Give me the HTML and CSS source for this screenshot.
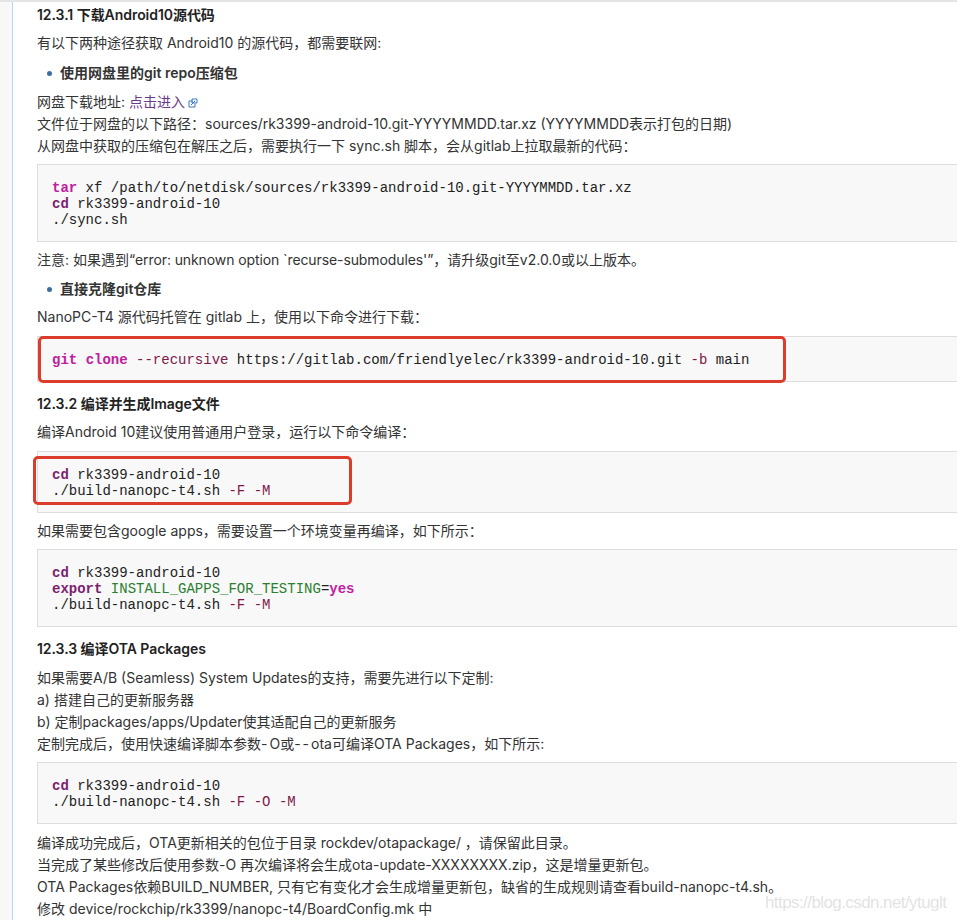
FILE: index.html
```html
<!DOCTYPE html>
<html lang="zh-CN">
<head>
<meta charset="utf-8">
<title>12.3 Android 10</title>
<link rel="stylesheet" href="styles.css">
</head>
<body>
<div class="page">
  <aside class="rail"></aside>
  <main class="content">
    <h4>12.3.1 下载Android10源代码</h4>
    <p class="gap-6">有以下两种途径获取 Android10 的源代码，都需要联网:</p>
    <ul class="list gap-8"><li><b>使用网盘里的git repo压缩包</b></li></ul>
    <p class="gap-7">网盘下载地址: <a class="link" href="#">点击进入<svg class="ext" viewBox="0 0 10 10" width="10" height="10"><path d="M1 3h4M1 3v6h6V6" fill="none" stroke="#3a78c2" stroke-width="1"/><path d="M4 1h5v4H4z" fill="none" stroke="#3a78c2" stroke-width="1"/><path d="M3 7l4-4" stroke="#3a78c2" stroke-width="1"/></svg></a><br>文件位于网盘的以下路径：sources/rk3399-android-10.git-YYYYMMDD.tar.xz (YYYYMMDD表示打包的日期)<br>从网盘中获取的压缩包在解压之后，需要执行一下 sync.sh 脚本，会从gitlab上拉取最新的代码：</p>
    <pre class="code gap-7"><span class="kw">tar</span> xf /path/to/netdisk/sources/rk3399-android-10.git-YYYYMMDD.tar.xz
<span class="bi">cd</span> rk3399-android-10
./sync.sh</pre>
    <p class="gap-7">注意: 如果遇到<span class="tight">“error: unknown option `recurse-submodules'”</span>，请升级git至v2.0.0或以上版本。</p>
    <ul class="list gap-7"><li><b>直接克隆git仓库</b></li></ul>
    <p class="gap-6">NanoPC-T4 源代码托管在 gitlab 上，使用以下命令进行下载：</p>
    <pre class="code gap-8"><span class="kw">git</span> <span class="kw">clone</span> <span class="op">--recursive</span> https://gitlab.com/friendlyelec/rk3399-android-10.git <span class="op">-b</span> main<span class="mark mark-a"></span></pre>
    <h4 class="gap-11">12.3.2 编译并生成Image文件</h4>
    <p class="gap-6">编译Android 10建议使用普通用户登录，运行以下命令编译：</p>
    <pre class="code gap-8"><span class="bi">cd</span> rk3399-android-10
./build-nanopc-t4.sh <span class="op">-F</span> <span class="op">-M</span><span class="mark mark-b"></span></pre>
    <p class="gap-7">如果需要包含google apps，需要设置一个环境变量再编译，如下所示：</p>
    <pre class="code gap-7"><span class="bi">cd</span> rk3399-android-10
<span class="bi">export</span> <span class="var">INSTALL_GAPPS_FOR_TESTING</span>=<span class="kw">yes</span>
./build-nanopc-t4.sh <span class="op">-F</span> <span class="op">-M</span></pre>
    <h4 class="gap-11">12.3.3 编译OTA Packages</h4>
    <p class="gap-7">如果需要A/B (Seamless) System Updates的支持，需要先进行以下定制:<br>a) 搭建自己的更新服务器<br>b) 定制packages/apps/Updater使其适配自己的更新服务<br>定制完成后，使用快速编译脚本参数<span class="dash">-</span>O或<span class="dash">--</span>ota可编译OTA Packages，如下所示:</p>
    <pre class="code gap-7"><span class="bi">cd</span> rk3399-android-10
./build-nanopc-t4.sh <span class="op">-F</span> <span class="op">-O</span> <span class="op">-M</span></pre>
    <p class="gap-8">编译成功完成后，OTA更新相关的包位于目录 rockdev/otapackage/ ，请保留此目录。<br>当完成了某些修改后使用参数-O 再次编译将会生成ota-update-XXXXXXXX.zip，这是增量更新包。<br>OTA Packages依赖BUILD_NUMBER, 只有它有变化才会生成增量更新包，缺省的生成规则请查看build-nanopc-t4.sh。<br>修改 device/rockchip/rk3399/nanopc-t4/BoardConfig.mk 中</p>
  </main>
</div>
<div class="watermark">https://blog.csdn.net/ytuglt</div>
</body>
</html>
```

FILE: styles.css
```css
html, body {
  margin: 0;
  padding: 0;
  background: #fff;
}
body {
  width: 957px;
  height: 920px;
  overflow: hidden;
  position: relative;
  font-family: Inter, "Noto Sans CJK SC", sans-serif;
  font-size: 14px;
  line-height: 22px;
  color: #333;
}
.page {
  display: flex;
  height: 920px;
  border-top: 2px solid #e4e4e4;
  box-sizing: border-box;
}
.rail {
  width: 12px;
  flex: none;
  background: #f8f8f8;
  border-right: 1px solid #b3d9f7;
}
.content {
  flex: 1;
  min-width: 0;
  padding: 2px 0 0 24px;
}
h4 {
  margin: 0;
  font-size: 14px;
  line-height: 22px;
  font-weight: 600;
  letter-spacing: -0.05px;
  color: #222;
}
p { margin: 0; }
.tight { letter-spacing: -0.1px; }
.dash { letter-spacing: 2px; }
.list {
  margin: 0;
  padding: 0 0 0 23px;
  list-style: none;
}
.list b { font-weight: 600; }
.list li { position: relative; }
.list li::before {
  content: "";
  position: absolute;
  left: -13px;
  top: 9px;
  width: 5px;
  height: 5px;
  border-radius: 50%;
  background: #3a6ea5;
}
.gap-6 { margin-top: 6px; }
.gap-7 { margin-top: 7px; }
.gap-8 { margin-top: 8px; }
.gap-11 { margin-top: 11px; }
.link { color: #6b3a86; text-decoration: none; }
.ext { margin-left: 3px; vertical-align: -1px; }
.code {
  position: relative;
  margin-bottom: 0;
  padding: 15px 14px 13px;
  background: #f8f8f8;
  border: 1px solid #ddd;
  border-right: 0;
  font-family: "Liberation Mono", monospace;
  font-size: 14px;
  line-height: 16px;
  color: #222;
}
.kw { color: #c0209f; font-weight: 700; }
.bi { color: #7d1f70; font-weight: 700; }
.op { color: #7d1848; }
.var { color: #2a8030; }
.mark {
  position: absolute;
  border: 3px solid #dc3c2c;
  border-radius: 5px;
  box-sizing: border-box;
}
.mark-a { left: 0; top: -1px; width: 748px; height: 47px; }
.mark-b { left: -5px; top: 4px; width: 319px; height: 49px; }
.watermark {
  position: absolute;
  left: 765px;
  top: 891px;
  font-family: "Liberation Sans", sans-serif;
  font-size: 17px;
  line-height: 24px;
  letter-spacing: -0.58px;
  color: rgba(190, 190, 190, 0.45);
  white-space: nowrap;
}
```
